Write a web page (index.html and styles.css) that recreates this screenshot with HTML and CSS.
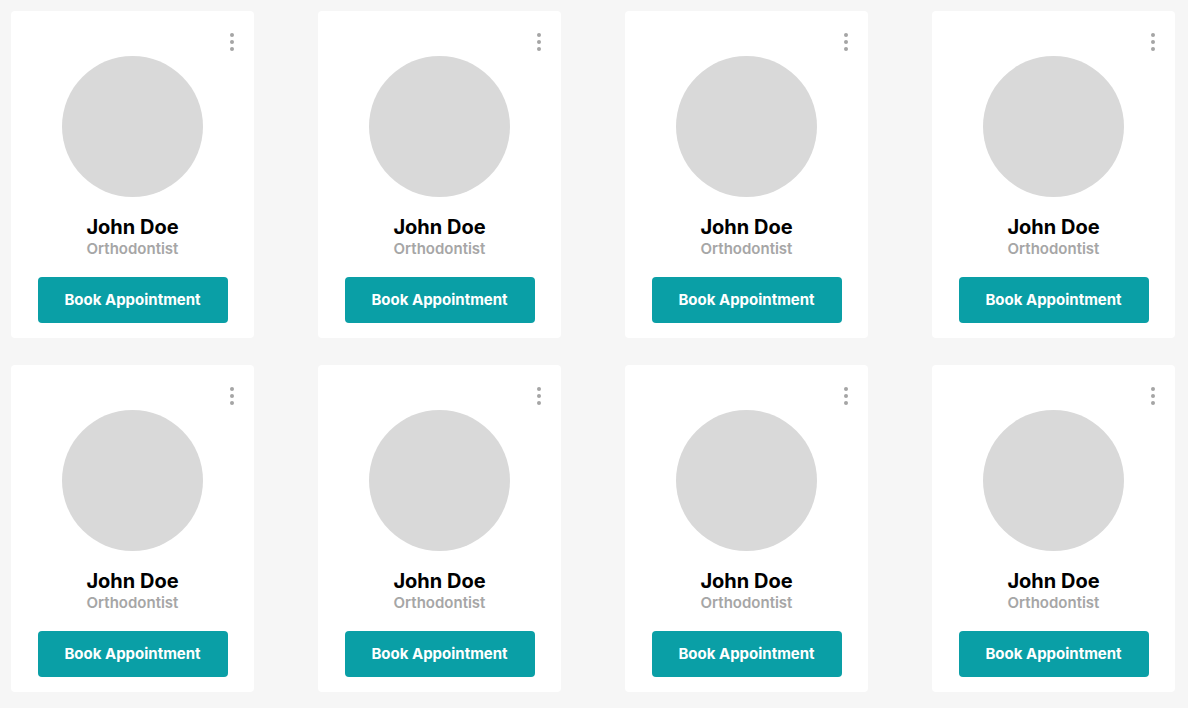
FILE: index.html
```html
<!DOCTYPE html>
<html>
<head>
<meta charset="utf-8">
<link rel="stylesheet" href="styles.css">
</head>
<body>
<div class="grid">
  <div class="card"><button class="menu" aria-label="More"><span></span><span></span><span></span></button><div class="avatar"></div><div class="name">John Doe</div><div class="role">Orthodontist</div><button class="book">Book Appointment</button></div>
  <div class="card"><button class="menu" aria-label="More"><span></span><span></span><span></span></button><div class="avatar"></div><div class="name">John Doe</div><div class="role">Orthodontist</div><button class="book">Book Appointment</button></div>
  <div class="card"><button class="menu" aria-label="More"><span></span><span></span><span></span></button><div class="avatar"></div><div class="name">John Doe</div><div class="role">Orthodontist</div><button class="book">Book Appointment</button></div>
  <div class="card"><button class="menu" aria-label="More"><span></span><span></span><span></span></button><div class="avatar"></div><div class="name">John Doe</div><div class="role">Orthodontist</div><button class="book">Book Appointment</button></div>
  <div class="card"><button class="menu" aria-label="More"><span></span><span></span><span></span></button><div class="avatar"></div><div class="name">John Doe</div><div class="role">Orthodontist</div><button class="book">Book Appointment</button></div>
  <div class="card"><button class="menu" aria-label="More"><span></span><span></span><span></span></button><div class="avatar"></div><div class="name">John Doe</div><div class="role">Orthodontist</div><button class="book">Book Appointment</button></div>
  <div class="card"><button class="menu" aria-label="More"><span></span><span></span><span></span></button><div class="avatar"></div><div class="name">John Doe</div><div class="role">Orthodontist</div><button class="book">Book Appointment</button></div>
  <div class="card"><button class="menu" aria-label="More"><span></span><span></span><span></span></button><div class="avatar"></div><div class="name">John Doe</div><div class="role">Orthodontist</div><button class="book">Book Appointment</button></div>
</div>
</body>
</html>
```

FILE: styles.css
```css
html, body {
  margin: 0;
  padding: 0;
  background: #f6f6f6;
  font-family: Inter, "Liberation Sans", Arial, sans-serif;
}
.grid {
  display: grid;
  grid-template-columns: repeat(4, 243px);
  column-gap: 64px;
  row-gap: 27px;
  padding: 11px;
}
.card {
  position: relative;
  background: #ffffff;
  border-radius: 4px;
  height: 327px;
  box-sizing: border-box;
  padding-top: 45px;
  display: flex;
  flex-direction: column;
  align-items: center;
}
.menu {
  position: absolute;
  top: 20px;
  right: 18px;
  width: 8px;
  height: 22px;
  padding: 0;
  border: 0;
  background: none;
  display: flex;
  flex-direction: column;
  align-items: center;
  justify-content: center;
  gap: 3px;
  cursor: pointer;
}
.menu span {
  display: block;
  width: 4px;
  height: 4px;
  border-radius: 50%;
  background: #a5a5a5;
}
.avatar {
  width: 141px;
  height: 141px;
  border-radius: 50%;
  background: #d9d9d9;
}
.name {
  margin-top: 18px;
  font-size: 20px;
  line-height: 24px;
  font-weight: 700;
  color: #000;
}
.role {
  margin-top: 1px;
  font-family: Inter, "Liberation Sans", Arial, sans-serif;
  font-size: 15px;
  line-height: 18px;
  font-weight: 600;
  color: #a6a6a6;
}
.book {
  margin-top: 19px;
  width: 190px;
  height: 46px;
  padding: 0 0 2px;
  border: 0;
  border-radius: 4px;
  background: #0a9fa6;
  color: #fff;
  font-family: Inter, "Liberation Sans", Arial, sans-serif;
  font-size: 15px;
  font-weight: 700;
  cursor: pointer;
}
```
